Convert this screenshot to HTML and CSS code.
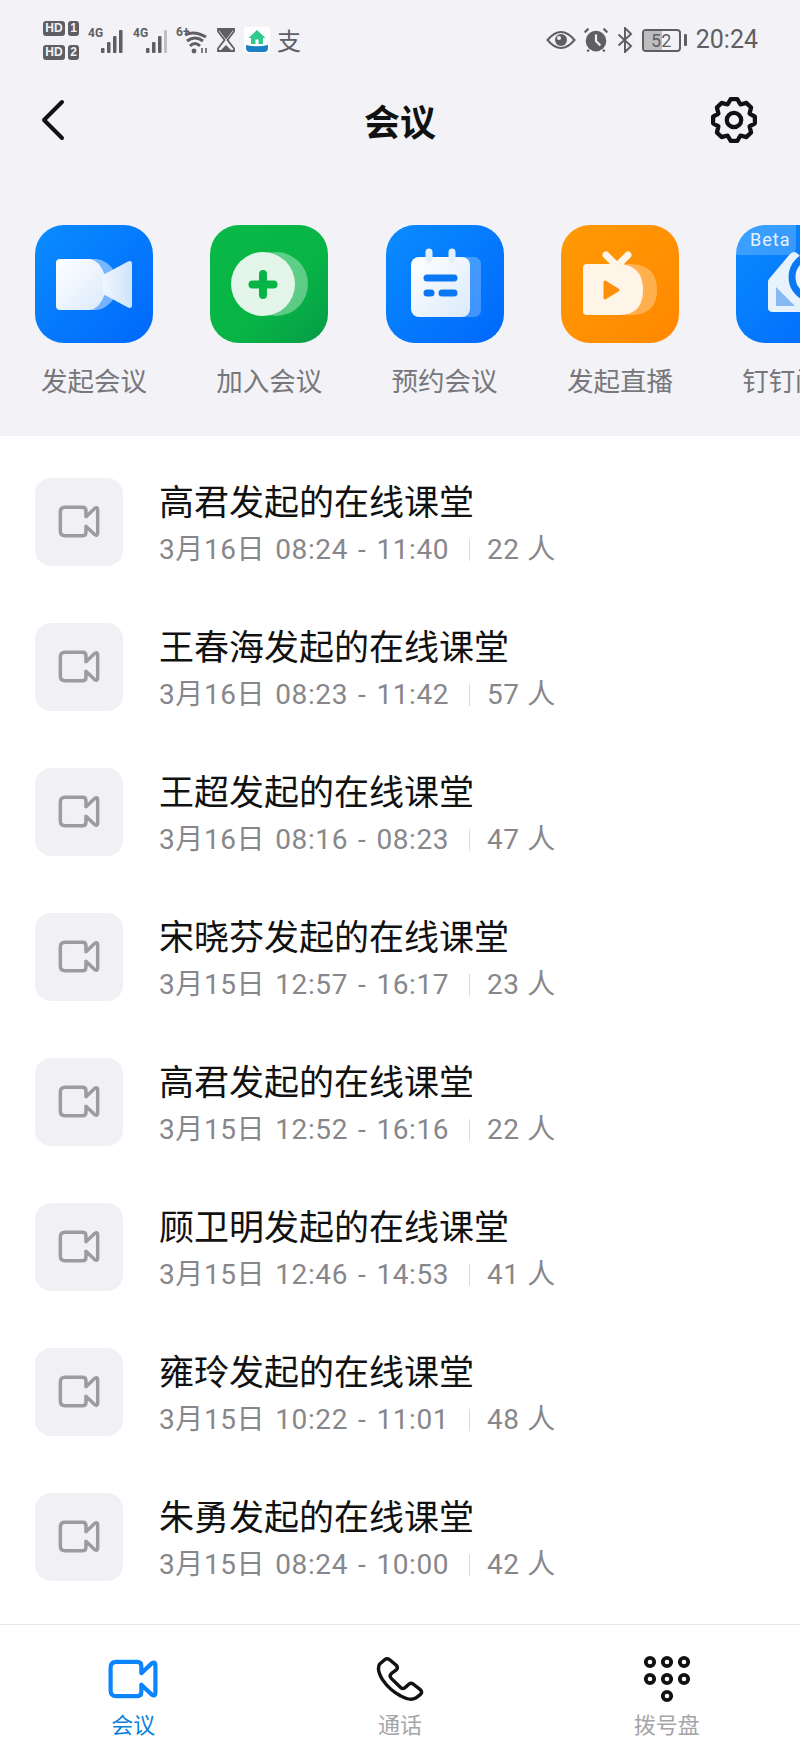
FILE: index.html
```html
<!DOCTYPE html>
<html lang="zh-CN">
<head>
<meta charset="utf-8">
<title>会议</title>
<link rel="stylesheet" href="styles.css">
</head>
<body>
<svg class="defs" width="0" height="0" aria-hidden="true">
  <defs>
    <symbol id="cam" viewBox="0 0 48 38"><path d="M8 2.500H28Q32 2.500 32 6.500V13.500L42 4Q45.500 2 45.500 5.500V32.500Q45.500 36 42 34L32 24.500V31.500Q32 35.500 28 35.500H8Q2.500 35.500 2.500 30V8Q2.500 2.500 8 2.500Z" fill="none" stroke="currentColor" stroke-width="4" stroke-linejoin="round"/></symbol>
    <linearGradient id="gBlue" x1="0" y1="0" x2="1" y2="1"><stop offset="0" stop-color="#0a8cff"/><stop offset="1" stop-color="#0068fb"/></linearGradient>
    <linearGradient id="gGreen" x1="0" y1="0" x2="1" y2="1"><stop offset="0" stop-color="#09b948"/><stop offset="0.6" stop-color="#07b445"/><stop offset="1" stop-color="#069b48"/></linearGradient>
    <linearGradient id="gOrange" x1="0" y1="0" x2="1" y2="1"><stop offset="0" stop-color="#ff9a05"/><stop offset="1" stop-color="#ff8800"/></linearGradient>
    <linearGradient id="gWhite" x1="0" y1="0" x2="1" y2="1"><stop offset="0" stop-color="#ffffff"/><stop offset="1" stop-color="#dbeafb"/></linearGradient>
    <linearGradient id="gWing" x1="0" y1="0" x2="1" y2="0"><stop offset="0" stop-color="#f0f6fe"/><stop offset="1" stop-color="#cfe3fa"/></linearGradient>
  </defs>
</svg>
<div class="app">
  <header class="top">
    <div class="status">
      <div class="status-group">
        <div class="hd"><div class="hd-line"><span class="hd-a">HD</span><span class="hd-b">1</span></div><div class="hd-line"><span class="hd-a">HD</span><span class="hd-b">2</span></div></div>
        <svg class="sig" viewBox="0 0 36 28"><text x="0" y="11" class="sig-t">4G</text><rect x="13" y="22" width="3.500" height="5" rx="1"/><rect x="19" y="16" width="3.500" height="11" rx="1"/><rect x="25" y="10" width="3.500" height="17" rx="1"/><rect x="31" y="4" width="3.500" height="23" rx="1"/></svg>
        <svg class="sig" viewBox="0 0 36 28"><text x="0" y="11" class="sig-t">4G</text><rect x="13" y="22" width="3.500" height="5" rx="1"/><rect x="19" y="16" width="3.500" height="11" rx="1"/><rect x="25" y="10" width="3.500" height="17" rx="1"/><rect x="31" y="4" width="3" height="23" rx="1" opacity=".35"/></svg>
        <svg class="wifi" viewBox="0 0 32 28" fill="none" stroke="#5f5f63" stroke-width="3"><text x="0" y="10" class="sig-t" stroke="none">6+</text><path d="M9 9Q18 4 30 11M11 15Q19 9 27 15M14 20Q19 15 24 20"/><circle cx="18" cy="25" r="2.400" fill="#5f5f63" stroke="none"/><path d="M26 22v5M30 22v5" stroke-width="1.600"/></svg>
        <svg class="glass" viewBox="0 0 18 24"><path d="M1 1H17V3.500L10.500 12L17 20.500V23H1V20.500L7.500 12L1 3.500Z" fill="#f2f2f7" stroke="#5f5f63" stroke-width="1.800"/><path d="M1 1H17L9 11.500Z" fill="#5f5f63"/><path d="M3 23L9 17L15 23Z" fill="#5f5f63"/></svg>
        <svg class="home" viewBox="0 0 26 26"><rect width="26" height="26" rx="2" fill="#fff"/><path d="M2 18Q13 20.500 24 18V21Q24 25 20 25H6Q2 25 2 21Z" fill="#1a7fc4"/><path d="M13 3L21.500 11H19V17H7V11H4.500Z" fill="#2fc88f"/><rect x="11.500" y="12.500" width="3" height="4.500" fill="#fff"/></svg>
        <span class="zhi">支</span>
      </div>
      <div class="status-group right">
        <svg class="eye" viewBox="0 0 30 20" fill="none"><path d="M1.500 10Q15 -6 28.500 10Q15 26 1.500 10Z" stroke="#5f5f63" stroke-width="2"/><circle cx="15" cy="10" r="6" fill="#5f5f63"/><circle cx="13" cy="8" r="2" fill="#f2f2f7"/></svg>
        <svg class="alarm" viewBox="0 0 24 24"><circle cx="12" cy="13" r="9.500" fill="#5f5f63"/><path d="M12 7V13L16 17" stroke="#f2f2f7" stroke-width="2" fill="none"/><path d="M1.500 5L5 1.500M22.500 5L19 1.500M4 22.500L5.500 21M20 22.500L18.500 21" stroke="#5f5f63" stroke-width="2"/></svg>
        <svg class="bt" viewBox="0 0 16 26" fill="none" stroke="#5f5f63" stroke-width="2"><path d="M1.500 7.500L14 19L8 25V1L14 7L1.500 18.500"/></svg>
        <div class="battery"><div class="battery-body"><div class="battery-fill"></div><span class="battery-num">52</span></div><div class="battery-nub"></div></div>
        <span class="time">20:24</span>
      </div>
    </div>
    <nav class="navbar">
      <svg class="back" viewBox="0 0 24 42"><path d="M21 3L3 21L21 39" fill="none" stroke="#111" stroke-width="4" stroke-linecap="round" stroke-linejoin="round"/></svg>
      <h1 class="nav-title">会议</h1>
      <svg class="gear" viewBox="-2 -2 52 52" fill="none" stroke="#111"><path d="M20.560 2.270H27.440L30.700 7.830L36.930 6.200L41.800 11.070L40.170 17.300L45.730 20.560V27.440L40.170 30.700L41.800 36.930L36.930 41.800L30.700 40.170L27.440 45.730H20.560L17.300 40.170L11.070 41.800L6.200 36.930L7.830 30.700L2.270 27.440V20.560L7.830 17.300L6.200 11.070L11.070 6.200L17.300 7.830Z" stroke-width="4.400" stroke-linejoin="round"/><circle cx="24" cy="24" r="7.500" stroke-width="4.400"/></svg>
    </nav>
    <div class="actions">
      <div class="action">
        <svg class="app-icon" viewBox="0 0 118 118"><rect width="118" height="118" rx="29" fill="url(#gBlue)"/><path d="M50 34H62Q72 35 80 47L68 59L80 72Q72 84 62 85H50Z" fill="#fff" opacity=".45"/><path d="M25 34H55Q64 35 70 50V69Q64 84 55 85H25Q21 85 21 81V38Q21 34 25 34Z" fill="url(#gWhite)"/><path d="M68 50L93 36.500Q97 35 97 39V80Q97 84 93 82.500L68 69Z" fill="url(#gWing)"/></svg>
        <span class="action-label">发起会议</span>
      </div>
      <div class="action">
        <svg class="app-icon" viewBox="0 0 118 118"><rect width="118" height="118" rx="29" fill="url(#gGreen)"/><circle cx="66" cy="59" r="32" fill="#fff" opacity=".35"/><circle cx="53" cy="59" r="32" fill="#e2f5e8"/><path d="M53 49V70M42.500 59.500H63.500" stroke="#08b445" stroke-width="8" stroke-linecap="round"/></svg>
        <span class="action-label">加入会议</span>
      </div>
      <div class="action">
        <svg class="app-icon" viewBox="0 0 118 118"><rect width="118" height="118" rx="29" fill="url(#gBlue)"/><rect x="68" y="32" width="27" height="60" rx="7" fill="#fff" opacity=".25"/><rect x="25" y="32" width="59" height="60" rx="8" fill="url(#gWhite)"/><path d="M43 27V34M66 27V34" stroke="#e4effc" stroke-width="7" stroke-linecap="round"/><path d="M41 53H68" stroke="#0a78f5" stroke-width="7" stroke-linecap="round"/><path d="M41 68H45M56 68H68" stroke="#0a78f5" stroke-width="7" stroke-linecap="round"/></svg>
        <span class="action-label">预约会议</span>
      </div>
      <div class="action">
        <svg class="app-icon" viewBox="0 0 118 118"><rect width="118" height="118" rx="29" fill="url(#gOrange)"/><path d="M50 39H70Q96 40 96 65Q96 90 70 90H50Z" fill="#fff" opacity=".3"/><path d="M26 39H58Q82 40 82 65Q82 90 58 90H26Q22 90 22 86V43Q22 39 26 39Z" fill="#fff4e8"/><path d="M45 30L56 41L67 30" fill="none" stroke="#fff4e8" stroke-width="7" stroke-linecap="round" stroke-linejoin="round"/><path d="M44 57L57 65L44 73Z" fill="#ff8e0b" stroke="#ff8e0b" stroke-width="3" stroke-linejoin="round"/></svg>
        <span class="action-label">发起直播</span>
      </div>
      <div class="action">
        <svg class="app-icon" viewBox="0 0 118 118"><rect width="118" height="118" rx="29" fill="url(#gBlue)"/><path d="M0 30V29Q0 0 29 0H60V22Q60 30 52 30Z" fill="#fff" opacity=".2"/><text x="14" y="21" class="beta">Beta</text><path d="M33 54L54 29Q58 25 62 29L78 45V87H37Q32 87 32 83V57Q32 55 33 54Z" fill="#e8f2fd"/><path d="M40 62L59 81H40Z" fill="#86b9f4"/><circle cx="78" cy="52" r="22" fill="#eef5fe" stroke="#0a78f5" stroke-width="7"/></svg>
        <span class="action-label">钉钉闪会</span>
      </div>
    </div>
  </header>
  <main class="list">
    <div class="row"><div class="thumb"><svg class="cam"><use href="#cam"/></svg></div><div class="info"><div class="title">高君发起的在线课堂</div><div class="sub"><span class="when">3月16日 08:24 - 11:40</span><span class="count">22 人</span></div></div></div>
    <div class="row"><div class="thumb"><svg class="cam"><use href="#cam"/></svg></div><div class="info"><div class="title">王春海发起的在线课堂</div><div class="sub"><span class="when">3月16日 08:23 - 11:42</span><span class="count">57 人</span></div></div></div>
    <div class="row"><div class="thumb"><svg class="cam"><use href="#cam"/></svg></div><div class="info"><div class="title">王超发起的在线课堂</div><div class="sub"><span class="when">3月16日 08:16 - 08:23</span><span class="count">47 人</span></div></div></div>
    <div class="row"><div class="thumb"><svg class="cam"><use href="#cam"/></svg></div><div class="info"><div class="title">宋晓芬发起的在线课堂</div><div class="sub"><span class="when">3月15日 12:57 - 16:17</span><span class="count">23 人</span></div></div></div>
    <div class="row"><div class="thumb"><svg class="cam"><use href="#cam"/></svg></div><div class="info"><div class="title">高君发起的在线课堂</div><div class="sub"><span class="when">3月15日 12:52 - 16:16</span><span class="count">22 人</span></div></div></div>
    <div class="row"><div class="thumb"><svg class="cam"><use href="#cam"/></svg></div><div class="info"><div class="title">顾卫明发起的在线课堂</div><div class="sub"><span class="when">3月15日 12:46 - 14:53</span><span class="count">41 人</span></div></div></div>
    <div class="row"><div class="thumb"><svg class="cam"><use href="#cam"/></svg></div><div class="info"><div class="title">雍玲发起的在线课堂</div><div class="sub"><span class="when">3月15日 10:22 - 11:01</span><span class="count">48 人</span></div></div></div>
    <div class="row"><div class="thumb"><svg class="cam"><use href="#cam"/></svg></div><div class="info"><div class="title">朱勇发起的在线课堂</div><div class="sub"><span class="when">3月15日 08:24 - 10:00</span><span class="count">42 人</span></div></div></div>
  </main>
  <footer class="tabs">
    <div class="tab active"><svg class="tab-cam"><use href="#cam"/></svg><span class="tab-label">会议</span></div>
    <div class="tab"><svg class="tab-icon" viewBox="38 12 160 148"><path d="M68 25Q78 18 86 25L106 42Q113 50 106 57L90 69Q83 75 90 84L120 113Q128 120 136 112L147 102Q153 97 160 102L183 120Q191 128 183 136L168 147Q150 157 120 140Q85 122 62 88Q42 55 53 38Z" fill="none" stroke="#111" stroke-width="11" stroke-linejoin="round"/></svg><span class="tab-label">通话</span></div>
    <div class="tab"><svg class="tab-icon" viewBox="0 0 48 48" fill="none" stroke="#111" stroke-width="3.800"><circle cx="7" cy="7" r="4.200"/><circle cx="24" cy="7" r="4.200"/><circle cx="41" cy="7" r="4.200"/><circle cx="7" cy="24" r="4.200"/><circle cx="24" cy="24" r="4.200"/><circle cx="41" cy="24" r="4.200"/><circle cx="24" cy="41" r="4.200"/></svg><span class="tab-label">拨号盘</span></div>
  </footer>
</div>
</body>
</html>
```
FILE: styles.css
```css
* { box-sizing: border-box; }
html, body { margin: 0; padding: 0; }
body { background: #fff; font-family: "Noto Sans CJK SC", "Noto Sans", sans-serif; }
.defs { position: absolute; }
.app { width: 800px; height: 1758px; display: flex; flex-direction: column; overflow: hidden; background: #fff; }

.top { height: 436px; flex: none; background: #f2f2f7; display: flex; flex-direction: column; }
.status { height: 82px; padding: 20px 42px 0 43px; display: flex; justify-content: space-between; align-items: flex-start; }
.status-group { display: flex; align-items: center; height: 40px; }
.hd { display: flex; flex-direction: column; gap: 9px; width: 36px; }
.hd-line { display: flex; gap: 3px; }
.hd-a, .hd-b { background: #5f5f63; color: #f2f2f7; font: 700 12px/15px "Liberation Sans", sans-serif; border-radius: 3px; text-align: center; height: 15px; }
.hd-a { width: 22px; }
.hd-b { width: 11px; }
.sig-t { font: 700 12px "Roboto", sans-serif; fill: #5f5f63; }
.sig { width: 36px; height: 28px; margin-left: 9px; fill: #5f5f63; }
.wifi { width: 32px; height: 28px; margin-left: 7px; }
.glass { width: 18px; height: 24px; margin-left: 9px; }
.home { width: 26px; height: 26px; margin-left: 9px; }
.zhi { margin-left: 7px; width: 25px; font-size: 24px; line-height: 26px; color: #5f5f63; }
.eye { width: 30px; height: 20px; }
.alarm { width: 26px; height: 26px; margin-left: 7px; }
.bt { width: 16px; height: 26px; margin-left: 8px; }
.battery { display: flex; align-items: center; gap: 3px; margin-left: 9px; }
.battery-body { position: relative; width: 39px; height: 23px; border: 2px solid #5f5f63; border-radius: 4px; overflow: hidden; }
.battery-fill { width: 52%; height: 100%; background: #bdbdc0; margin: 0; }
.battery-num { position: absolute; inset: 0; text-align: center; font: 400 18px/19px "Roboto", sans-serif; color: #5f5f63; }
.battery-nub { width: 3px; height: 12px; background: #5f5f63; border-radius: 1px; }
.time { margin-left: 9px; font: 400 25px/30px "Roboto", sans-serif; color: #5f5f63; }

.navbar { height: 76px; padding: 0 41px 0 41px; display: flex; align-items: center; justify-content: space-between; position: relative; }
.back { width: 24px; height: 42px; }
.nav-title { position: absolute; left: 0; right: 0; margin: 0; text-align: center; font-size: 36px; line-height: 76px; font-weight: 700; color: #111; }
.gear { width: 50px; height: 50px; }

.actions { margin-top: 67px; padding-left: 35px; display: flex; gap: 57.3px; }
.action { width: 118px; flex: none; display: flex; flex-direction: column; align-items: center; }
.app-icon { width: 118px; height: 118px; }
.beta { font: 400 18px "Roboto", sans-serif; fill: #e8f2fd; letter-spacing: 1px; }
.action-label { margin-top: 19px; font-size: 26.5px; line-height: 36px; color: #77777b; white-space: nowrap; }

.list { flex: 1; padding: 13px 0 0 35px; }
.row { height: 145px; display: flex; align-items: center; gap: 36px; }
.thumb { width: 88px; height: 88px; border-radius: 16px; background: #f1f1f5; display: flex; align-items: center; justify-content: center; flex: none; }
.cam { width: 42px; height: 33px; color: #9c9ca0; }
.info { display: flex; flex-direction: column; margin-top: 6px; }
.title { font-size: 35px; line-height: 46px; color: #111; white-space: nowrap; }
.sub { margin-top: 4px; display: flex; align-items: center; height: 46px; font: 400 28px/46px "Roboto", "Noto Sans CJK SC", sans-serif; letter-spacing: .6px; color: #87878b; white-space: nowrap; }
.when { width: 309px; word-spacing: 2.5px; position: relative; box-sizing: content-box; padding-right: 2px; }
.when::after { content: ""; position: absolute; right: 0; top: 12px; height: 22px; width: 1px; background: #dcdcdf; }
.count { margin-left: 17px; }

.tabs { height: 134px; flex: none; border-top: 1px solid #e6e6e8; display: grid; grid-template-columns: repeat(3, 1fr); padding-top: 30px; background: #fff; }
.tab { display: flex; flex-direction: column; align-items: center; }
.tab-cam { width: 50px; height: 40px; color: #0a84ff; margin-top: 4px; }
.tab-icon { width: 50px; height: 48px; }
.tab-label { font-size: 22px; line-height: 30px; margin-top: 5px; color: #a5a5a8; }
.tab-cam + .tab-label { margin-top: 9px; }
.active .tab-label { color: #0a7fdc; }
```
